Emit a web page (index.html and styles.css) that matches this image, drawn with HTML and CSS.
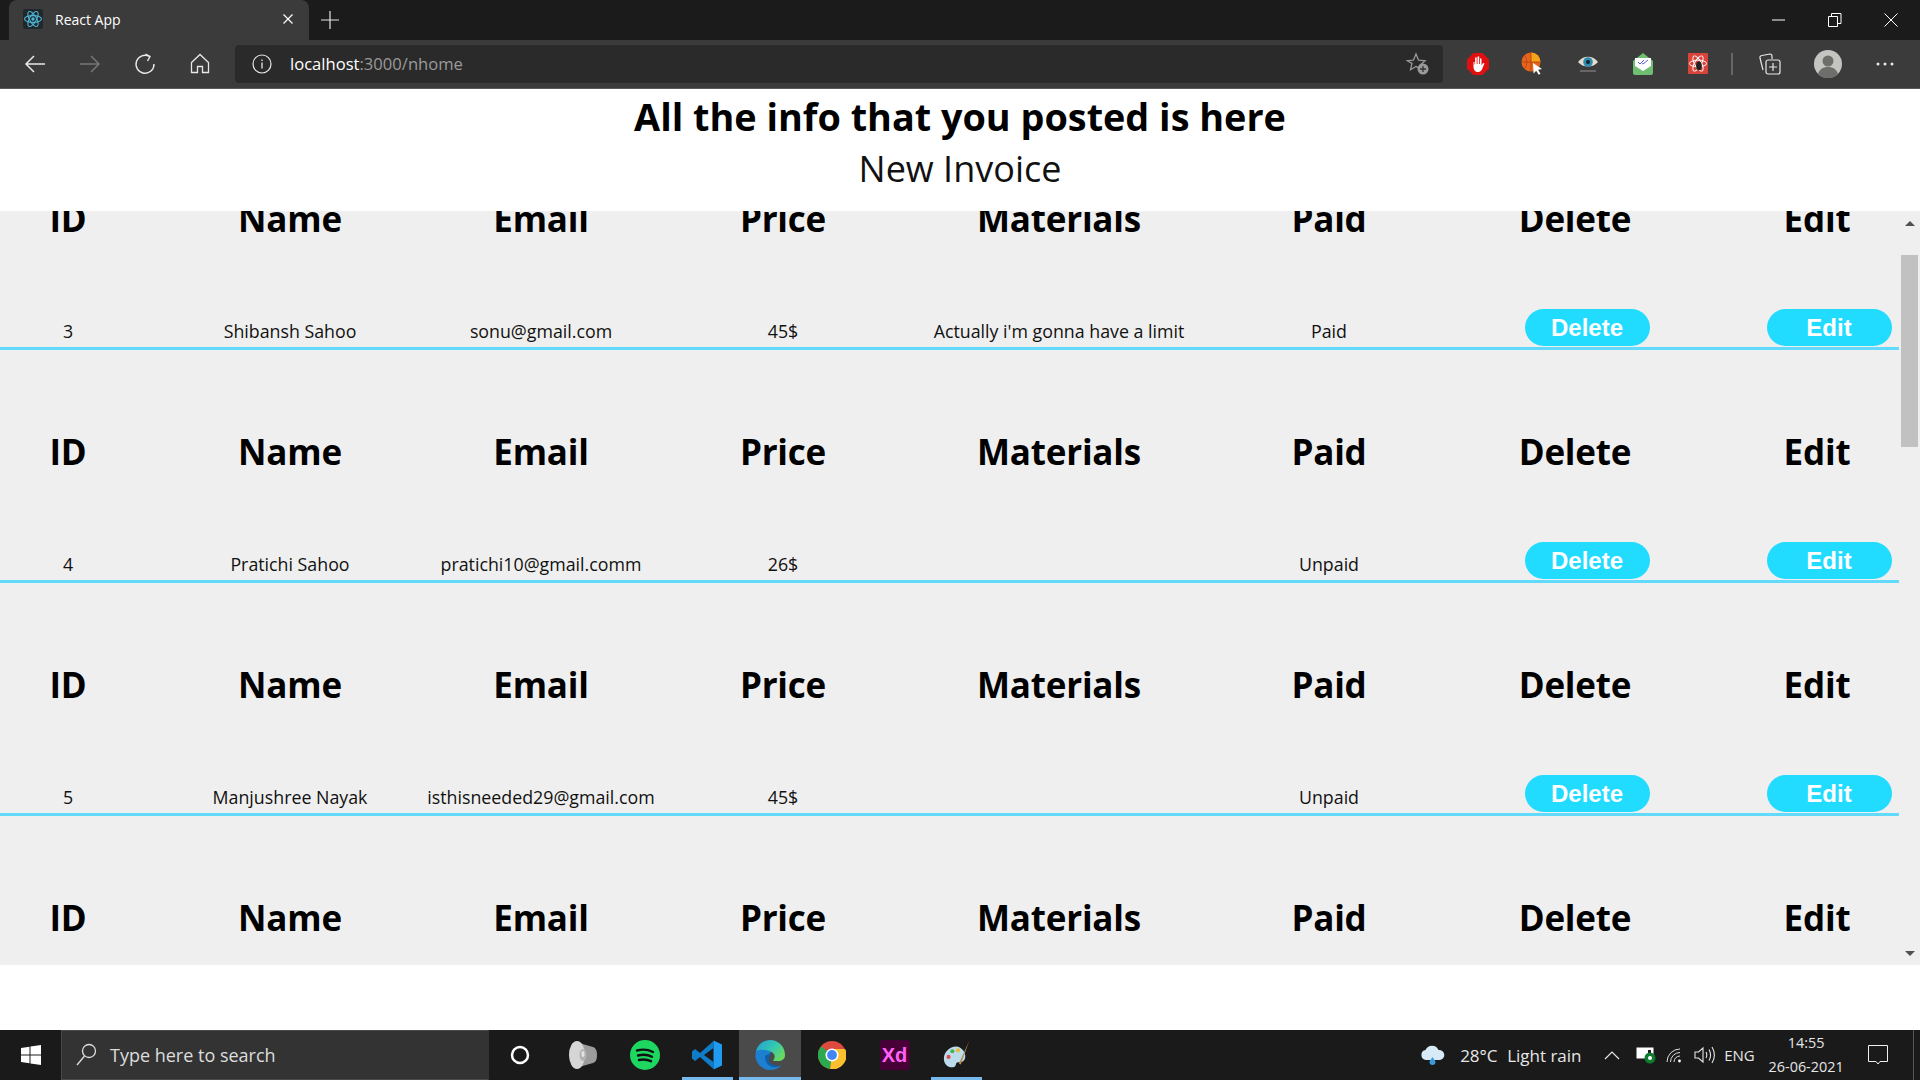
FILE: index.html
```html
<!DOCTYPE html>
<html lang="en">
<head>
    <meta charset="UTF-8">
    <meta name="viewport" content="width=device-width, initial-scale=1.0">
    <title>React App</title>
    <link rel="stylesheet" href="styles.css">
</head>
<body>
    <div class="tabstrip">
        <div class="tab">
            <svg class="favicon" width="20" height="20" viewBox="0 0 20 20">
                <rect width="20" height="20" rx="2" fill="#20282c"/>
                <g fill="none" stroke="#4fb6d6" stroke-width="1.1">
                    <ellipse cx="10" cy="10" rx="8.5" ry="3.4"/>
                    <ellipse cx="10" cy="10" rx="8.5" ry="3.4" transform="rotate(60 10 10)"/>
                    <ellipse cx="10" cy="10" rx="8.5" ry="3.4" transform="rotate(120 10 10)"/>
                </g>
                <circle cx="10" cy="10" r="1.7" fill="#4fb6d6"/>
            </svg>
            <span class="tab-title">React App</span>
            <svg class="tab-close" width="12" height="12" viewBox="0 0 12 12"><path d="M1.500 1.500l9 9M10.500 1.500l-9 9" stroke="#fff" stroke-width="1.200"/></svg>
        </div>
        <svg class="new-tab" width="18" height="18" viewBox="0 0 18 18"><path d="M9 0v18M0 9h18" stroke="#e6e6e6" stroke-width="1.200"/></svg>
        <div class="window-btns">
            <svg width="14" height="14" viewBox="0 0 14 14"><path d="M0 7h13" stroke="#fff"/></svg>
            <svg width="14" height="14" viewBox="0 0 14 14"><path d="M.5 3.500h9v10h-9zM3.500 3.500v-3h9.500v10h-3.500" fill="none" stroke="#fff"/></svg>
            <svg width="14" height="14" viewBox="0 0 14 14"><path d="M.5.500l13 13M13.500.500l-13 13" stroke="#fff"/></svg>
        </div>
    </div>

    <div class="toolbar">
        <div class="tool">
            <svg width="22" height="20" viewBox="0 0 22 20"><path d="M21 10H2M10 2l-8 8 8 8" fill="none" stroke="#e8e8e8" stroke-width="1.500"/></svg>
        </div>
        <div class="tool">
            <svg width="22" height="20" viewBox="0 0 22 20"><path d="M1 10h19M12 2l8 8-8 8" fill="none" stroke="#777" stroke-width="1.500"/></svg>
        </div>
        <div class="tool">
            <svg width="22" height="22" viewBox="0 0 22 22"><path d="M15.500 3.500A9 9 0 1 0 20 11" fill="none" stroke="#e8e8e8" stroke-width="1.400"/><path d="M11.500 1l4.500 2.500-2.500 4.500" fill="none" stroke="#e8e8e8" stroke-width="1.400"/></svg>
        </div>
        <div class="tool">
            <svg width="20" height="21" viewBox="0 0 20 21"><path d="M1.500 9.500L10 1.500l8.500 8v10h-6v-6h-5v6h-6z" fill="none" stroke="#e8e8e8" stroke-width="1.300"/></svg>
        </div>
        <div class="address">
            <svg class="info-icon" width="20" height="20" viewBox="0 0 20 20"><circle cx="10" cy="10" r="9" fill="none" stroke="#e8e8e8" stroke-width="1.200"/><path d="M10 8.500v6M10 5.500v1.500" stroke="#e8e8e8" stroke-width="1.300"/></svg>
            <span class="url"><span class="url-host">localhost</span>:3000/nhome</span>
            <svg class="fav-icon" width="24" height="24" viewBox="0 0 24 24"><path d="M10 2l2.600 6.200 6.400.5-4.900 4.200 1 4.500-5.100-3-5.500 3.300 1.500-6.300L1.200 8.700l6.200-.5z" fill="none" stroke="#9a9a9a" stroke-width="1.300"/><circle cx="17" cy="17" r="5.500" fill="#9a9a9a"/><path d="M17 14v6M14 17h6" stroke="#333" stroke-width="1.300"/></svg>
        </div>
        <div class="extensions">
            <div class="tool">
                <svg width="22" height="22" viewBox="0 0 22 22"><path d="M6.500 0h9L22 6.500v9L15.500 22h-9L0 15.500v-9z" fill="#e01010"/><path d="M6.500 9v5c0 3 2 5 4.500 5s4-2 4.500-4l2-4.500-1.500-.5-1.500 2.500V5.500H13V11h-.8V3.500h-1.700V11h-.8V4.500H8.100v7h-.6V9z" fill="#fff"/></svg>
            </div>
            <div class="tool">
                <svg width="24" height="24" viewBox="0 0 24 24"><circle cx="10" cy="10" r="9.500" fill="#e8641c"/><path d="M10 .500A9.500 9.500 0 0 1 19.500 10H10z" fill="#f7a21b"/><path d="M10 .500v19M.500 10h19M3.500 3.500c3 3 3 10 0 13" fill="none" stroke="#a8430f" stroke-width=".8"/><path d="M12 11l9 6-4 .8 2.500 4-1.800 1-2.500-4-2.600 2.800z" fill="#fff"/></svg>
            </div>
            <div class="tool">
                <svg width="22" height="20" viewBox="0 0 22 20"><path d="M1 8c5-7 15-7 20 0-5 6-15 6-20 0z" fill="#e6dccb"/><circle cx="11" cy="8" r="4.800" fill="#2e8bb0"/><circle cx="11" cy="8" r="2" fill="#10222c"/><path d="M3 17h16" stroke="#777" stroke-width="1.500"/></svg>
            </div>
            <div class="tool">
                <svg width="20" height="22" viewBox="0 0 20 22"><path d="M0 8l10-8 10 8v12a2 2 0 0 1-2 2H2a2 2 0 0 1-2-2z" fill="#6fbf73"/><path d="M2 5h16v8l-8 5-8-5z" fill="#fff"/><path d="M5 9l2 2 4-4M9 10.500l1 .5 5-4" fill="none" stroke="#5a5ad0" stroke-width="1"/></svg>
            </div>
            <div class="tool">
                <svg width="20" height="21" viewBox="0 0 21 22"><rect width="21" height="22" rx="1" fill="#d8433a"/><g fill="none" stroke="#fff" stroke-width="1"><ellipse cx="10.500" cy="11" rx="9" ry="3.500"/><ellipse cx="10.500" cy="11" rx="9" ry="3.500" transform="rotate(60 10.500 11)"/><ellipse cx="10.500" cy="11" rx="9" ry="3.500" transform="rotate(120 10.500 11)"/></g><ellipse cx="11.500" cy="13.500" rx="3" ry="4.500" fill="#222"/></svg>
            </div>
        </div>
        <div class="tool-divider"></div>
        <svg class="collections" width="22" height="22" viewBox="0 0 22 22"><path d="M4 17L1 5a2 2 0 0 1 2-2.500L11 1a2 2 0 0 1 2 2v3" fill="none" stroke="#e8e8e8" stroke-width="1.200"/><rect x="7" y="7" width="14" height="14" rx="2" fill="none" stroke="#e8e8e8" stroke-width="1.200"/><path d="M14 10v8M10 14h8" stroke="#e8e8e8" stroke-width="1.200"/></svg>
        <svg class="avatar" width="28" height="28" viewBox="0 0 28 28"><circle cx="14" cy="14" r="14" fill="#c4c4c1"/><circle cx="14" cy="11" r="5.500" fill="#6e6e6c"/><path d="M4 24c2-6 6-7 10-7s8 1 10 7a14 14 0 0 1-20 0z" fill="#6e6e6c"/></svg>
        <svg class="more" width="18" height="4" viewBox="0 0 18 4"><circle cx="2" cy="2" r="1.500" fill="#e8e8e8"/><circle cx="9" cy="2" r="1.500" fill="#e8e8e8"/><circle cx="16" cy="2" r="1.500" fill="#e8e8e8"/></svg>
    </div>

    <main class="page">
        <h1 class="page-title">All the info that you posted is here</h1>
        <div class="new-invoice">New Invoice</div>
        <div class="pane">
            <div class="pane-view">
                <table class="invoices">
                    <tr>
                        <th>ID</th><th class="col-name">Name</th><th>Email</th><th>Price</th><th>Materials</th><th>Paid</th><th>Delete</th><th class="col-edit">Edit</th>
                    </tr>
                    <tr>
                        <td>3</td><td class="col-name">Shibansh Sahoo</td><td>sonu@gmail.com</td><td>45$</td><td>Actually i'm gonna have a limit</td><td>Paid</td>
                        <td><button class="row-btn">Delete</button></td><td class="col-edit"><button class="row-btn">Edit</button></td>
                    </tr>
                    <tr>
                        <th>ID</th><th class="col-name">Name</th><th>Email</th><th>Price</th><th>Materials</th><th>Paid</th><th>Delete</th><th class="col-edit">Edit</th>
                    </tr>
                    <tr>
                        <td>4</td><td class="col-name">Pratichi Sahoo</td><td>pratichi10@gmail.comm</td><td>26$</td><td></td><td>Unpaid</td>
                        <td><button class="row-btn">Delete</button></td><td class="col-edit"><button class="row-btn">Edit</button></td>
                    </tr>
                    <tr>
                        <th>ID</th><th class="col-name">Name</th><th>Email</th><th>Price</th><th>Materials</th><th>Paid</th><th>Delete</th><th class="col-edit">Edit</th>
                    </tr>
                    <tr>
                        <td>5</td><td class="col-name">Manjushree Nayak</td><td>isthisneeded29@gmail.com</td><td>45$</td><td></td><td>Unpaid</td>
                        <td><button class="row-btn">Delete</button></td><td class="col-edit"><button class="row-btn">Edit</button></td>
                    </tr>
                    <tr>
                        <th>ID</th><th class="col-name">Name</th><th>Email</th><th>Price</th><th>Materials</th><th>Paid</th><th>Delete</th><th class="col-edit">Edit</th>
                    </tr>
                </table>
            </div>
            <div class="scrollbar">
                <svg width="10" height="5" viewBox="0 0 10 5"><path d="M5 0l5 5H0z" fill="#505050"/></svg>
                <div class="scroll-track"><div class="scroll-thumb"></div></div>
                <svg width="10" height="5" viewBox="0 0 10 5"><path d="M0 0h10L5 5z" fill="#505050"/></svg>
            </div>
        </div>
    </main>

    <footer class="taskbar">
        <div class="start">
            <svg width="20" height="20" viewBox="0 0 20 20"><path d="M0 3l8.500-1.200V9.500H0zM9.500 1.600L20 0v9.500H9.500zM0 10.500h8.500v7.700L0 17zM9.500 10.500H20V20l-10.500-1.600z" fill="#fff"/></svg>
        </div>
        <div class="search">
            <svg width="22" height="24" viewBox="0 0 22 24"><circle cx="14" cy="8" r="6.500" fill="none" stroke="#ddd" stroke-width="1.300"/><path d="M9.500 13L2 22" stroke="#ddd" stroke-width="1.300"/></svg>
            <span>Type here to search</span>
        </div>
        <div class="task-icons">
            <div class="task-item">
                <svg width="22" height="22" viewBox="0 0 22 22"><circle cx="11" cy="11" r="8" fill="none" stroke="#fff" stroke-width="2.500"/></svg>
            </div>
            <div class="task-item">
                <svg width="28" height="30" viewBox="0 0 28 30"><path d="M10 3l14 4c3 1 4 4 4 8s-1 7-4 8l-14 4z" fill="#9c9c9c"/><ellipse cx="8" cy="15" rx="8" ry="14" fill="#d6d6d6"/><ellipse cx="14" cy="15" rx="3.500" ry="6" fill="#b2b2b2"/><ellipse cx="14" cy="14" rx="1.500" ry="3" fill="#e4e4e4"/></svg>
            </div>
            <div class="task-item">
                <svg width="30" height="30" viewBox="0 0 30 30"><circle cx="15" cy="15" r="15" fill="#1ed760"/><path d="M7 10.500c6-1.600 11-1 16 1.500M8 15.500c5-1.300 10-.8 14 1.300M9 20c4-1 8-.7 12 1.200" fill="none" stroke="#111" stroke-width="2.400" stroke-linecap="round"/></svg>
            </div>
            <div class="task-item is-open">
                <svg width="30" height="30" viewBox="0 0 30 30"><path d="M21.500 8L12 15l9.500 7v7L8 17l-5 4-3-2.500v-7L3 9l5 4L21.500 1z" fill="#0f7cc8"/><path d="M21.500 0.500L30 4.500v21l-8.500 4z" fill="#1f9cf0"/></svg>
            </div>
            <div class="task-item is-active">
                <svg width="30" height="30" viewBox="0 0 30 30">
                    <defs>
                        <linearGradient id="edgeTop" x1="0" y1="0" x2="1" y2=".6">
                            <stop offset="0" stop-color="#1f9ed8"/>
                            <stop offset=".6" stop-color="#35c8b0"/>
                            <stop offset="1" stop-color="#68d860"/>
                        </linearGradient>
                    </defs>
                    <path d="M1 11C-2 22 7 30 15 30c5 0 9-2 12-5-5 3-11 1-13-3-2-5 0-10 6-13-7-3-16-2-19 2z" fill="#1c7fd0"/>
                    <path d="M10 17c0 7 6 11 11 10 2-.3 4-1 6-2-5 2-9 0-12-2-2-2-1-6 1-9-3 0-6 1-6 3z" fill="#0f5ea8"/>
                    <path d="M1 11C3 4 9 0 15 0c9 0 15 7 15 15 0 4-3 6-7 6h-4c-1 0-1-1 0-2 1-2 1-4-1-6-5-4-13-4-17-2z" fill="url(#edgeTop)"/>
                </svg>
            </div>
            <div class="task-item">
                <svg width="28" height="28" viewBox="0 0 30 30"><circle cx="15" cy="15" r="15" fill="#dd4b3e"/><path d="M15 15L3.500 5.500A15 15 0 0 0 13 30z" fill="#2da94f"/><path d="M15 8.500h14A15 15 0 0 1 13 30l2-15z" fill="#fbc02d"/><circle cx="15" cy="15" r="7" fill="#fff"/><circle cx="15" cy="15" r="5.300" fill="#4285f4"/></svg>
            </div>
            <div class="task-item">
                <div class="xd-icon">Xd</div>
            </div>
            <div class="task-item is-open">
                <svg width="30" height="30" viewBox="0 0 30 32"><path d="M14 7C7 7 1 13 1 20c0 6 5 10 10 9 4-1 2-4 4-5s5 1 8-3c3-5-2-14-9-14z" fill="#bcdcec"/><circle cx="6" cy="18" r="2.200" fill="#d94f4f"/><circle cx="10" cy="12" r="2.200" fill="#4caf50"/><circle cx="16" cy="11" r="2.200" fill="#e8b93a"/><path d="M28 1l-9 25-2-1z" fill="#b98a4e"/></svg>
            </div>
        </div>
        <div class="tray">
            <svg class="tray-weather" width="26" height="20" viewBox="0 0 26 20"><path d="M6 15a5 5 0 0 1-.500-9.900A7 7 0 0 1 18.500 5 5 5 0 0 1 20 15z" fill="#d8eaf6"/><path d="M12.500 12c2 3 3 4 3 5a3 3 0 0 1-6 0c0-1 1-2 3-5z" fill="#3d9bdc"/></svg>
            <span class="tray-temp">28°C</span>
            <span class="tray-text">Light rain</span>
            <svg class="tray-chevron" width="16" height="10" viewBox="0 0 16 10"><path d="M1 9l7-7 7 7" fill="none" stroke="#e6e6e6" stroke-width="1.200"/></svg>
            <svg class="tray-battery" width="20" height="18" viewBox="0 0 20 18"><rect x="1" y="2" width="16" height="10" fill="#fff" stroke="#fff"/><rect x="3" y="4" width="12" height="6" fill="#1a1a1a"/><rect x="3" y="4" width="9" height="6" fill="#fff"/><circle cx="14" cy="12" r="5.500" fill="#0f7b2f"/><circle cx="14" cy="12" r="2" fill="#fff"/></svg>
            <svg class="tray-wifi" width="16" height="16" viewBox="0 0 16 16"><path d="M1 15A13 13 0 0 1 14 2M4.500 15A9.500 9.500 0 0 1 14 5.500M8 15a6 6 0 0 1 6-6" fill="none" stroke="#ddd" stroke-width="1"/><circle cx="13.500" cy="14" r="1.400" fill="#fff"/></svg>
            <svg class="tray-volume" width="21" height="18" viewBox="0 0 21 18"><path d="M1 6h3.500L9 2v14l-4.500-4H1z" fill="none" stroke="#e6e6e6" stroke-width="1.100"/><path d="M12 6c1 2 1 4 0 6M15 3.500c2 3.500 2 7.500 0 11M18 1c3 5 3 11 0 16" fill="none" stroke="#e6e6e6" stroke-width="1.100"/></svg>
            <span class="tray-lang">ENG</span>
            <div class="clock">
                <span>14:55</span>
                <span>26-06-2021</span>
            </div>
            <svg class="tray-notify" width="20" height="20" viewBox="0 0 20 20"><path d="M.5.500h19v16h-7.500l-2 2.500-2-2.500H.5z" fill="none" stroke="#f0f0f0" stroke-width="1"/></svg>
            <div class="show-desktop"></div>
        </div>
    </footer>
</body>
</html>
```

FILE: styles.css
```css
* {
    box-sizing: border-box;
}
html, body {
    margin: 0;
    height: 100%;
    overflow: hidden;
}
body {
    display: flex;
    flex-direction: column;
    width: 1920px;
    height: 1080px;
    font-family: "Open Sans", "Noto Sans", sans-serif;
    background: #fff;
}

/* browser chrome */
.tabstrip {
    display: flex;
    align-items: center;
    height: 40px;
    padding-left: 9px;
    background: #1b1b1b;
}
.tab {
    display: flex;
    align-items: center;
    width: 300px;
    height: 40px;
    padding: 0 15px 2px 14px;
    background: #3b3b3b;
    border-radius: 8px 8px 0 0;
}
.tab-title {
    flex: 1;
    margin-left: 12px;
    font-size: 14px;
    color: #fff;
}
.new-tab {
    margin-left: 12px;
}
.window-btns {
    display: flex;
    gap: 42px;
    margin-left: auto;
    padding-right: 22px;
}
.toolbar {
    display: flex;
    align-items: center;
    height: 49px;
    padding: 0 0 1px 7px;
    background: #3b3b3b;
    border-bottom: 1px solid #5a5a5a;
}
.tool {
    display: flex;
    align-items: center;
    justify-content: center;
    width: 55px;
    height: 40px;
}
.address {
    display: flex;
    align-items: center;
    width: 1208px;
    height: 38px;
    margin-left: 8px;
    padding: 0 13px 0 17px;
    background: #2a2a2a;
    border-radius: 4px;
}
.url {
    flex: 1;
    margin-left: 18px;
    font-size: 16.6px;
    color: #9a9a9a;
}
.url-host {
    color: #fff;
}
.extensions {
    display: flex;
    margin-left: 7px;
}
.tool-divider {
    width: 2px;
    height: 22px;
    margin-left: 6px;
    background: #666;
}
.collections {
    margin-left: 26px;
}
.avatar {
    margin-left: 33px;
}
.more {
    margin-left: 34px;
}

/* page */
.page {
    flex: 1;
    display: flex;
    flex-direction: column;
    min-height: 0;
}
.page-title {
    margin: 0;
    padding-top: 3px;
    height: 54px;
    font-size: 37.8px;
    line-height: 50px;
    font-weight: 700;
    text-align: center;
    color: #000;
}
.new-invoice {
    height: 68px;
    font-size: 36px;
    line-height: 52px;
    text-align: center;
    color: #111;
}
.pane {
    display: flex;
    height: 754px;
    background: #efefef;
}
.pane-view {
    width: 1900px;
    overflow: hidden;
}
.invoices {
    width: 1899px;
    margin-top: -94px;
    table-layout: fixed;
    border-collapse: separate;
    border-spacing: 0;
}
.invoices th,
.invoices td {
    padding: 0;
    text-align: center;
    color: #000;
    white-space: nowrap;
}
.invoices th {
    height: 165px;
    padding-top: 37px;
    font-size: 35px;
    letter-spacing: -0.2px;
    font-weight: 700;
}
.invoices td {
    height: 68px;
    padding-bottom: 4px;
    font-size: 17.8px;
    color: #111;
    vertical-align: bottom;
    border-bottom: 3px solid #61dafb;
}
.invoices tr > :nth-child(1) { width: 136px; }
.invoices tr > :nth-child(2) { width: 291px; }
.invoices tr > :nth-child(3) { width: 228px; }
.invoices tr > :nth-child(4) { width: 256px; }
.invoices tr > :nth-child(5) { width: 296px; }
.invoices tr > :nth-child(6) { width: 244px; }
.invoices tr > :nth-child(7) { width: 248px; }
.invoices tr > :nth-child(8) { width: 200px; }
.invoices .col-name {
    padding-left: 17px;
}
.invoices .col-edit {
    padding-left: 36px;
}
.row-btn {
    display: inline-block;
    width: 125px;
    height: 37px;
    margin: 0 0 -3px 24px;
    padding: 0;
    border: none;
    border-radius: 19px;
    background: #22dcff;
    color: #fff;
    font-family: "Liberation Sans", Arial, sans-serif;
    font-size: 24px;
    font-weight: 700;
    vertical-align: bottom;
}
.scrollbar {
    display: flex;
    flex-direction: column;
    align-items: center;
    width: 20px;
    padding: 10px 0 9px;
}
.scroll-track {
    flex: 1;
    width: 100%;
    padding: 29px 2px 0 1px;
}
.scroll-thumb {
    height: 192px;
    background: #c1c1c1;
}

/* windows taskbar */
.taskbar {
    display: flex;
    align-items: center;
    height: 50px;
    background: #1a1a1a;
}
.start {
    display: flex;
    align-items: center;
    justify-content: center;
    width: 61px;
    height: 50px;
}
.search {
    display: flex;
    align-items: center;
    gap: 13px;
    width: 428px;
    height: 50px;
    padding-left: 13px;
    background: #333;
    border: 1px solid #4a4a4a;
    border-right-color: #333;
    font-size: 18px;
    color: #ddd;
}
.task-icons {
    display: flex;
    flex: none;
}
.task-item {
    display: flex;
    align-items: center;
    justify-content: center;
    width: 62.4px;
    height: 50px;
}
.task-item.is-open {
    background: linear-gradient(#76b9ed, #76b9ed) center bottom / 51px 3px no-repeat;
}
.task-item.is-active {
    background: linear-gradient(#76b9ed, #76b9ed) center bottom / 100% 3px no-repeat, #4a4a4a;
}
.xd-icon {
    width: 30px;
    height: 30px;
    border-radius: 3px;
    background: #470137;
    color: #ff61f6;
    font-family: "Liberation Sans", Arial, sans-serif;
    font-size: 20px;
    font-weight: 700;
    line-height: 30px;
    text-align: center;
}
.tray {
    flex: 1;
    display: flex;
    align-items: center;
    height: 50px;
    padding-left: 432px;
    font-size: 17px;
    color: #e6e6e6;
    white-space: nowrap;
}
.tray > * {
    flex: none;
}
.tray-temp {
    width: 37px;
    margin-left: 14px;
}
.tray-text {
    width: 76px;
    margin-left: 10px;
}
.tray-chevron {
    margin-left: 21px;
}
.tray-battery {
    margin-left: 16px;
}
.tray-wifi {
    margin-left: 10px;
}
.tray-volume {
    margin-left: 12px;
}
.tray-lang {
    width: 31px;
    margin-left: 9px;
    font-size: 15px;
}
.clock {
    display: flex;
    flex-direction: column;
    align-items: center;
    width: 90px;
    margin-left: 6px;
    font-size: 14.4px;
    line-height: 24px;
}
.tray-notify {
    margin-left: 17px;
}
.show-desktop {
    width: 1px;
    height: 50px;
    margin-left: 25px;
    background: #555;
}
```
